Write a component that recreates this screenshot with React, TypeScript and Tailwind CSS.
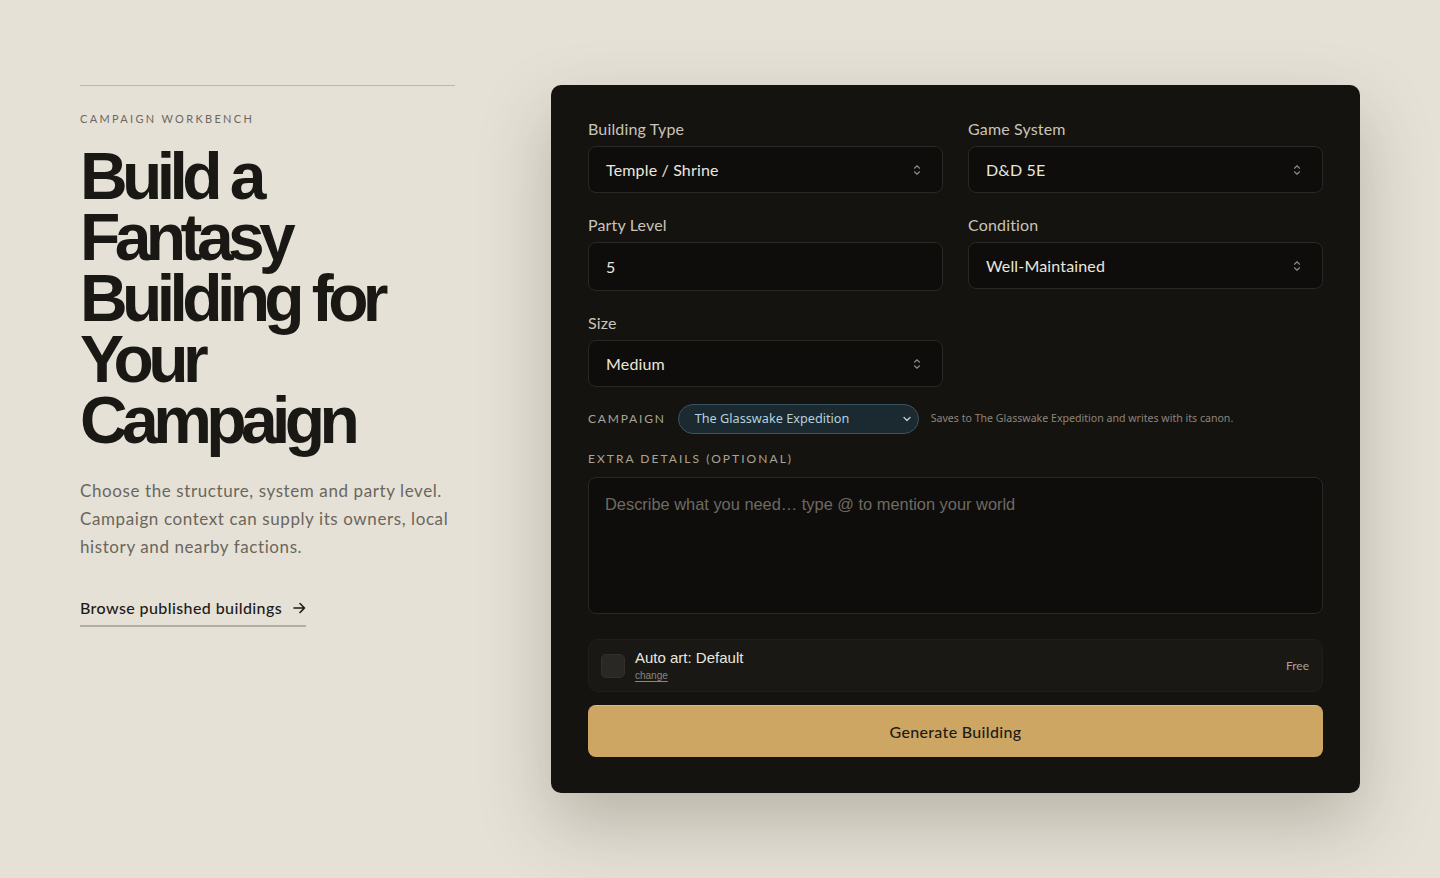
import React from "react";

const body = { fontFamily: "Lato, 'Noto Sans', sans-serif" };
const arial = { fontFamily: "'Liberation Sans', Arial, sans-serif" };
const noto = { fontFamily: "'Noto Sans', sans-serif" };

function UpDown() {
  return (
    <svg width="8" height="12" viewBox="0 0 8 12" fill="none" stroke="#8d887e" strokeWidth="1.2" strokeLinecap="round" strokeLinejoin="round">
      <path d="M1.5 4.2 4 1.8 6.5 4.2" />
      <path d="M1.5 7.8 4 10.2 6.5 7.8" />
    </svg>
  );
}

function Field({ label, value, select = true, tall = false }: { label: string; value: string; select?: boolean; tall?: boolean }) {
  return (
    <div className="flex flex-col">
      <div className="text-[16px] leading-[18px] tracking-[0.01em] text-[#c9c4b9]">{label}</div>
      <div
        className={`mt-[8px] flex items-center justify-between rounded-[8px] border border-[#2a2823] bg-[#0e0d0b] pl-[17px] pr-[21px] ${tall ? "h-[49px]" : "h-[47px]"}`}
      >
        <span className="text-[16px] tracking-[0.01em] text-[#ebe7dd]">{value}</span>
        {select && <UpDown />}
      </div>
    </div>
  );
}

export default function App() {
  return (
    <div className="min-h-[878px] w-full bg-[#e5e1d7]" style={body}>
      <div className="flex items-start gap-[96px] pl-[80px] pt-[85px]">
        {/* Intro column */}
        <div className="w-[375px] shrink-0">
          <div className="h-px w-full bg-[#bcb7ac]" />
          <div className="mt-[26px] text-[11px] leading-[14px] tracking-[0.21em] text-[#6d685e]">CAMPAIGN WORKBENCH</div>
          <h1
            className="mt-[20px] text-[66px] font-bold leading-[61px] tracking-[-0.085em] text-[#1a1814]"
            style={arial}
          >
            Build a<br />Fantasy<br />Building for<br />Your<br />Campaign
          </h1>
          <p className="mt-[26px] text-[17px] leading-[28px] tracking-[0.035em] text-[#6b665d]">
            Choose the structure, system and party level. Campaign context can supply its owners, local history and nearby factions.
          </p>
          <a className="mt-[35px] inline-flex items-center gap-[11px] border-b-2 border-[#b3aea3] pb-[5px] text-[16px] font-medium tracking-[0.025em] text-[#1d1b17]">
            Browse published buildings
            <svg width="13" height="12" viewBox="0 0 13 12" fill="none" stroke="#1d1b17" strokeWidth="1.6" strokeLinecap="round" strokeLinejoin="round">
              <path d="M1 6h10.5M7 1.5 11.5 6 7 10.5" />
            </svg>
          </a>
        </div>

        {/* Generator card */}
        <div className="w-[809px] shrink-0 rounded-[10px] bg-[#15130f] px-[37px] pb-[36px] pt-[35px] shadow-[0_30px_70px_rgba(60,50,30,0.26)]">
          <div className="grid grid-cols-2 gap-x-[25px] gap-y-[23px]">
            <Field label="Building Type" value="Temple / Shrine" />
            <Field label="Game System" value="D&D 5E" />
            <Field label="Party Level" value="5" select={false} tall />
            <Field label="Condition" value="Well-Maintained" />
            <Field label="Size" value="Medium" />
          </div>

          <div className="mt-[17px] flex items-center">
            <span className="text-[12px] tracking-[0.15em] text-[#a8a397]">CAMPAIGN</span>
            <div className="ml-[12px] flex h-[30px] w-[241px] items-center justify-between rounded-full border border-[#3b5461] bg-[#1b2a31] pl-[16px] pr-[6px]">
              <span className="text-[12.7px] text-[#b6d0dc]" style={noto}>The Glasswake Expedition</span>
              <svg width="10" height="10" viewBox="0 0 10 10" fill="none" stroke="#b6d0dc" strokeWidth="1.3" strokeLinecap="round" strokeLinejoin="round">
                <path d="M2 3.5 5 6.5 8 3.5" />
              </svg>
            </div>
            <span className="ml-[12px] text-[10.6px] text-[#8b867c]" style={noto}>
              Saves to The Glasswake Expedition and writes with its canon.
            </span>
          </div>

          <div className="mt-[17px] text-[12px] leading-[16px] tracking-[0.17em] text-[#a8a397]">EXTRA DETAILS (OPTIONAL)</div>
          <div className="mt-[10px] h-[137px] rounded-[8px] border border-[#2a2823] bg-[#0e0d0b] px-[16px] pt-[14px]">
            <span className="text-[16.4px] text-[#6f6a62]" style={arial}>Describe what you need… type @ to mention your world</span>
          </div>

          <div className="mt-[25px] flex h-[53px] items-center rounded-[10px] border border-[#221f1b] bg-[#1a1815] pl-[12px] pr-[13px]">
            <div className="h-[24px] w-[24px] rounded-[5px] border border-[#33302b] bg-[#2a2825]" />
            <div className="ml-[10px] flex flex-col" style={arial}>
              <span className="text-[15px] leading-[18px] text-[#ebe7dd]">Auto art: Default</span>
              <span className="mt-[3px] text-[10px] leading-[12px] text-[#8b867c] underline underline-offset-2">change</span>
            </div>
            <span className="ml-auto text-[12px] text-[#a8a397]">Free</span>
          </div>

          <button className="mt-[13px] flex h-[52px] w-full items-center justify-center rounded-[8px] border-t border-[#dcb977] bg-[#cca662] text-[16px] font-medium tracking-[0.02em] text-[#1d1b17]">
            Generate Building
          </button>
        </div>
      </div>
    </div>
  );
}
